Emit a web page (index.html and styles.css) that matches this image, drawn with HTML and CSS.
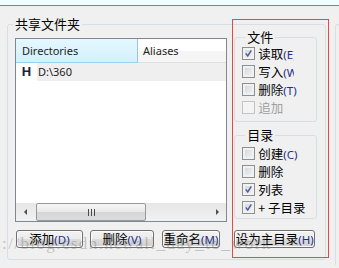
FILE: index.html
```html
<!DOCTYPE html>
<html lang="zh-CN">

<head>
    <meta charset="UTF-8">
    <meta name="viewport" content="width=device-width, initial-scale=1.0">
    <title>共享文件夹</title>
    <link rel="stylesheet" href="styles.css">
</head>

<body>
    <div class="titlebar"></div>

    <div class="window">
        <fieldset class="group shared">
            <legend>共享文件夹</legend>
            <div class="shared-body">
                <div class="left">
                    <div class="list">
                        <div class="list-head">
                            <div class="col col-dir">Directories</div>
                            <div class="col col-alias">Aliases</div>
                        </div>
                        <div class="list-row">
                            <span class="row-icon">H</span>
                            <span class="row-name">D:\360</span>
                        </div>
                        <div class="hscroll">
                            <span class="arrow arrow-left"></span>
                            <span class="thumb"><span class="grip"></span></span>
                            <span class="track"></span>
                            <span class="arrow arrow-right"></span>
                        </div>
                    </div>
                    <div class="buttons">
                        <button class="btn btn-add">添加<span class="key">(D)</span></button>
                        <button class="btn btn-del">删除<span class="key">(V)</span></button>
                        <button class="btn btn-ren">重命名<span class="key">(M)</span></button>
                    </div>
                </div>

                <div class="right">
                    <fieldset class="group sub files">
                        <legend>文件</legend>
                        <label class="check checked"><span class="box"><svg viewBox="0 0 13 13"><path d="M3.2 6.4 L5.6 9.4 L9.8 2.8" /></svg></span><span class="text clip">读取<span class="key">(E)</span></span></label>
                        <label class="check"><span class="box"></span><span class="text clip">写入<span class="key">(W)</span></span></label>
                        <label class="check"><span class="box"></span><span class="text">删除<span class="key">(T)</span></span></label>
                        <label class="check disabled"><span class="box"></span><span class="text">追加</span></label>
                    </fieldset>
                    <fieldset class="group sub dirs">
                        <legend>目录</legend>
                        <label class="check"><span class="box"></span><span class="text">创建<span class="key">(C)</span></span></label>
                        <label class="check"><span class="box"></span><span class="text">删除</span></label>
                        <label class="check checked"><span class="box"><svg viewBox="0 0 13 13"><path d="M3.2 6.4 L5.6 9.4 L9.8 2.8" /></svg></span><span class="text">列表</span></label>
                        <label class="check checked"><span class="box"><svg viewBox="0 0 13 13"><path d="M3.2 6.4 L5.6 9.4 L9.8 2.8" /></svg></span><span class="text">+ 子目录</span></label>
                    </fieldset>
                    <button class="btn btn-home">设为主目录<span class="key">(H)</span></button>
                </div>
            </div>
        </fieldset>
        <div class="next-group"></div>
    </div>

    <p class="next-text">目录的权限只对该目录有效，子目录的权限可以另外设置。</p>

    <!-- overlays from the original screenshot -->
    <div class="watermark">https://blog.csdn.net/all_day_to_work</div>
    <div class="highlight"></div>
</body>

</html>
```

FILE: styles.css
```css
/* dialog base */
body {
    margin: 0;
    background-color: #f0f0f0;
    font-family: "Noto Sans CJK SC", "Noto Sans", sans-serif;
    font-size: 12px;
    color: #000;
    overflow: hidden;
    position: relative;
    height: 268px;
}

.titlebar {
    height: 5px;
    background-color: #effefe;
    border-bottom: 1px solid #828282;
}

.window {
    display: flex;
    align-items: flex-start;
}

/* group boxes */
.group {
    margin: 0;
    border: 1px solid #d5dfe5;
    border-radius: 3px;
    min-width: 0;
}

.group legend {
    padding: 0 2px;
    font-size: 12.5px;
}

.shared {
    margin: 10px 0 0 7px;
    width: 320px;
    box-sizing: border-box;
    padding: 0 8px 11px 5px;
}

.shared legend {
    line-height: 16px;
    font-size: 13px;
}

.shared-body {
    display: flex;
    gap: 7px;
}

.left {
    width: 213px;
    margin-left: 2px;
    padding-top: 6px;
}

.right {
    width: 83px;
}

.next-group {
    margin: 18px 0 0 9px;
    width: 3px;
    height: 240px;
    border-left: 1px solid #d5dfe5;
    border-top: 1px solid #d5dfe5;
    border-radius: 3px 0 0 0;
}

/* list view */
.list {
    height: 184px;
    box-sizing: border-box;
    border: 1px solid #828790;
    background-color: #fff;
    display: flex;
    flex-direction: column;
    font-family: "Noto Sans", sans-serif;
    font-size: 11px;
}

.list-head {
    display: flex;
    height: 24px;
}

.col {
    box-sizing: border-box;
    line-height: 23px;
    padding-left: 6px;
    color: #1e1e1e;
}

.col-dir {
    width: 122px;
    background: linear-gradient(#e4f8ff, #d3f0fd);
    border-right: 1px solid #93c9e6;
    border-bottom: 1px solid #96d3f2;
}

.col-alias {
    flex: 1;
    padding-left: 5px;
    background: linear-gradient(#fff 50%, #f5f5f5 50%);
    border-bottom: 1px solid #e0e0e0;
}

.list-row {
    display: flex;
    height: 18px;
    line-height: 18px;
}

.row-icon {
    width: 21px;
    text-align: center;
    font-family: "Liberation Sans", sans-serif;
    font-weight: bold;
    font-size: 13px;
    color: #14223a;
}

.row-name {
    flex: 1;
    background-color: #efefef;
    padding-left: 1px;
    color: #222;
}

.hscroll {
    margin-top: auto;
    height: 18px;
    display: flex;
    background: linear-gradient(#e6e6e6, #f2f2f2);
}

.arrow {
    width: 20px;
    position: relative;
}

.arrow-right {
    width: 17px;
}

.arrow::after {
    content: "";
    position: absolute;
    top: 6px;
    left: 8px;
    border: 3px solid transparent;
}

.arrow-left::after {
    border-right: 3px solid #4d4d4d;
    left: 5px;
}

.arrow-right::after {
    border-left: 3px solid #4d4d4d;
    left: 7px;
}

.thumb {
    width: 110px;
    box-sizing: border-box;
    border: 1px solid #989898;
    border-radius: 2px;
    background: linear-gradient(#f6f6f6, #e8e8e8 50%, #d6d6d6 50%, #dcdcdc);
    display: flex;
    align-items: center;
    justify-content: center;
}

.grip {
    width: 7px;
    height: 7px;
    background: repeating-linear-gradient(90deg, #4b4b4b 0 1px, transparent 1px 3px);
}

.track {
    flex: 1;
}

/* buttons */
.buttons {
    display: flex;
    margin-top: 8px;
    padding-left: 1px;
}

.btn {
    height: 18px;
    box-sizing: border-box;
    padding: 0;
    border: 1px solid #707070;
    border-radius: 3px;
    background: linear-gradient(#f2f2f2, #ebebeb 50%, #dddddd 50%, #cfcfcf);
    box-shadow: inset 0 0 0 1px #fcfcfc;
    font-family: "Noto Sans CJK SC", "Noto Sans", sans-serif;
    font-size: 12.5px;
    line-height: 16px;
    color: #000;
}

.btn-add {
    width: 67px;
}

.btn-del {
    width: 64px;
    margin-left: 7px;
}

.btn-ren {
    width: 58px;
    margin-left: 8px;
}

.btn-home {
    width: 81px;
    margin-top: 11px;
}

.key {
    color: #1d2f86;
    font-family: "Noto Sans", sans-serif;
    font-size: 11.5px;
}

/* checkbox groups */
.sub {
    padding: 2px 4px 5px 7px;
}

.sub legend {
    line-height: 10px;
    margin-left: 3px;
}

.dirs {
    margin-top: 8px;
    padding-top: 4px;
    padding-bottom: 2px;
}

.check {
    display: flex;
    align-items: center;
    height: 18px;
    white-space: nowrap;
}

.box {
    width: 13px;
    height: 13px;
    box-sizing: border-box;
    border: 1px solid #8e8f8f;
    background: linear-gradient(135deg, #cfd2d6, #f7f7f7);
    box-shadow: inset 0 0 0 2px #f1f1f1;
    margin-right: 3px;
    flex: none;
}

.box svg {
    display: block;
    width: 11px;
    height: 11px;
}

.box path {
    fill: none;
    stroke: #4a5d96;
    stroke-width: 1.7;
}

.text {
    font-size: 12.5px;
}

.clip {
    width: 36px;
    overflow: hidden;
}

.disabled .box {
    border-color: #c4c4c4;
    background: #f4f4f4;
    box-shadow: none;
}

.disabled .text {
    color: #a0a0a0;
}

.next-text {
    margin: 1px 0 0 18px;
    width: 318px;
    overflow: hidden;
    font-size: 13px;
    line-height: 16px;
    white-space: nowrap;
}

/* annotations over the screenshot */
.watermark {
    position: absolute;
    left: -38px;
    top: 234px;
    font-family: "Liberation Serif", serif;
    font-size: 17px;
    letter-spacing: 1.4px;
    color: rgba(120, 120, 120, 0.4);
    white-space: nowrap;
}

.highlight {
    position: absolute;
    left: 232px;
    top: 19px;
    width: 97px;
    height: 239px;
    box-sizing: border-box;
    border: 1px solid #e84848;
}
```
